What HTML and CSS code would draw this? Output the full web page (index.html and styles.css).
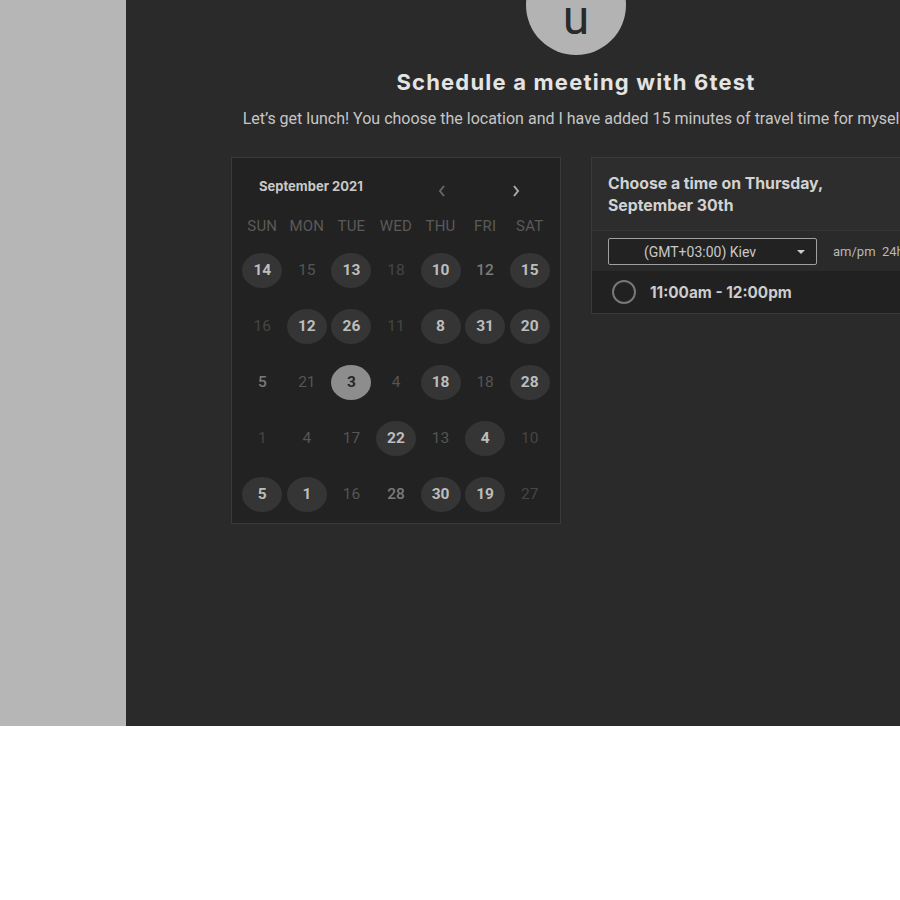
FILE: index.html
```html
<!DOCTYPE html>
<html>
<head>
<meta charset="utf-8">
<link rel="stylesheet" href="styles.css">
</head>
<body>
<div class="page">
  <div class="side"></div>
  <div class="main">
    <div class="avatar"><span>u</span></div>
    <h1 class="title">Schedule a meeting with 6test</h1>
    <p class="subtitle">Let’s get lunch! You choose the location and I have added 15 minutes of travel time for myself.</p>
    <div class="panels">
      <div class="calendar">
        <div class="cal-head">
          <span class="month">September 2021</span>
          <span class="arrow prev">
            <svg width="10" height="14" viewBox="0 0 10 14"><path d="M7 2 L3 7 L7 12" fill="none" stroke="#666" stroke-width="2"/></svg>
          </span>
          <span class="arrow next">
            <svg width="10" height="14" viewBox="0 0 10 14"><path d="M3 2 L7 7 L3 12" fill="none" stroke="#aaa" stroke-width="2"/></svg>
          </span>
        </div>
        <div class="grid">
          <div class="wd">SUN</div><div class="wd">MON</div><div class="wd">TUE</div><div class="wd">WED</div><div class="wd">THU</div><div class="wd">FRI</div><div class="wd">SAT</div>

          <div class="day"><span class="on">14</span></div>
          <div class="day"><span class="off">15</span></div>
          <div class="day"><span class="on">13</span></div>
          <div class="day"><span class="off dim">18</span></div>
          <div class="day"><span class="on">10</span></div>
          <div class="day"><span class="off mid">12</span></div>
          <div class="day"><span class="on">15</span></div>

          <div class="day"><span class="off dim">16</span></div>
          <div class="day"><span class="on">12</span></div>
          <div class="day"><span class="on">26</span></div>
          <div class="day"><span class="off dim">11</span></div>
          <div class="day"><span class="on">8</span></div>
          <div class="day"><span class="on">31</span></div>
          <div class="day"><span class="on">20</span></div>

          <div class="day"><span class="off mid">5</span></div>
          <div class="day"><span class="off">21</span></div>
          <div class="day"><span class="sel">3</span></div>
          <div class="day"><span class="off">4</span></div>
          <div class="day"><span class="on">18</span></div>
          <div class="day"><span class="off">18</span></div>
          <div class="day"><span class="on">28</span></div>

          <div class="day"><span class="off dim">1</span></div>
          <div class="day"><span class="off">4</span></div>
          <div class="day"><span class="off">17</span></div>
          <div class="day"><span class="on">22</span></div>
          <div class="day"><span class="off">13</span></div>
          <div class="day"><span class="on">4</span></div>
          <div class="day"><span class="off dim">10</span></div>

          <div class="day"><span class="on">5</span></div>
          <div class="day"><span class="on">1</span></div>
          <div class="day"><span class="off">16</span></div>
          <div class="day"><span class="off mid">28</span></div>
          <div class="day"><span class="on">30</span></div>
          <div class="day"><span class="on">19</span></div>
          <div class="day"><span class="off dim">27</span></div>
        </div>
      </div>
      <div class="times">
        <div class="times-head">Choose a time on Thursday,<br>September 30th</div>
        <div class="tz-row">
          <div class="select">
            <span>(GMT+03:00) Kiev</span>
            <svg class="caret" width="8" height="4" viewBox="0 0 8 4"><path d="M0 0 L8 0 L4 4 Z" fill="#ccc"/></svg>
          </div>
          <span class="fmt">am/pm&nbsp;&nbsp;24h</span>
        </div>
        <div class="slot">
          <span class="radio"></span>
          <span class="slot-text">11:00am - 12:00pm</span>
        </div>
      </div>
    </div>
  </div>
</div>
</body>
</html>
```
FILE: styles.css
```css
html, body {
  margin: 0;
  padding: 0;
  overflow: hidden;
  background: #ffffff;
  font-family: Roboto, "Liberation Sans", sans-serif;
}
.page {
  display: flex;
  height: 726px;
  width: 1026px;
}
.side {
  width: 126px;
  flex: none;
  background: #b6b6b6;
}
.main {
  width: 900px;
  flex: none;
  background: #2a2a2a;
  display: flex;
  flex-direction: column;
  align-items: center;
  overflow: hidden;
}
.avatar {
  width: 100px;
  height: 100px;
  border-radius: 50%;
  background: #b3b3b3;
  margin-top: -45px;
  flex: none;
  display: flex;
  justify-content: center;
  align-items: center;
}
.avatar span {
  font-family: Roboto, sans-serif;
  font-size: 48px;
  line-height: 48px;
  color: #2a2a2a;
  margin-top: 26px;
}
.title {
  margin: 13px 0 0;
  font-family: Inter, "Liberation Sans", sans-serif;
  font-weight: 700;
  font-size: 22px;
  line-height: 28px;
  color: #e4e4e4;
  letter-spacing: 1.2px;
}
.subtitle {
  margin: 13px 0 0;
  font-size: 16px;
  line-height: 20px;
  color: #c6c6c6;
  white-space: nowrap;
}
.panels {
  display: flex;
  gap: 30px;
  margin-top: 28px;
  margin-left: 2px;
  align-items: flex-start;
}
.calendar {
  width: 328px;
  border: 1px solid #3a3a3a;
  background: #222222;
  padding-bottom: 1px;
}
.cal-head {
  height: 52px;
  display: flex;
  align-items: center;
  position: relative;
}
.month {
  margin-left: 27px;
  font-family: Inter, "Liberation Sans", sans-serif;
  font-size: 13px;
  font-weight: 700;
  color: #c8c8c8;
  margin-top: 4px;
}
.arrow {
  position: absolute;
  top: 26px;
  display: flex;
}
.prev { left: 205px; }
.next { left: 279px; }
.grid {
  display: grid;
  grid-template-columns: repeat(7, 1fr);
  grid-auto-rows: 56px;
  grid-template-rows: 32px;
  padding: 0 8px;
}
.wd {
  display: flex;
  align-items: center;
  justify-content: center;
  font-size: 15px;
  color: #5a5a5a;
  letter-spacing: 0.2px;
}
.day {
  display: flex;
  align-items: center;
  justify-content: center;
}
.day span {
  width: 40px;
  height: 35px;
  border-radius: 50%;
  display: flex;
  align-items: center;
  justify-content: center;
  font-size: 15.5px;
}
.on {
  background: #353535;
  color: #bdbdbd;
  font-weight: 700;
}
.sel {
  background: #8d8d8d;
  color: #262626;
  font-weight: 700;
}
.off {
  color: #555555;
}
.off.dim { color: #464646; }
.off.mid { color: #7a7a7a; font-weight: 500; }
.times {
  width: 330px;
  border: 1px solid #3a3a3a;
  background: #2d2d2d;
}
.times-head {
  padding: 15px 16px 13px;
  font-family: Inter, "Liberation Sans", sans-serif;
  font-size: 15.8px;
  line-height: 22px;
  font-weight: 700;
  color: #d2d2d2;
  border-bottom: 1px solid #353535;
}
.tz-row {
  display: flex;
  align-items: center;
  padding: 7px 16px 6px;
  background: #2a2a2a;
}
.select {
  width: 207px;
  height: 25px;
  border: 1px solid #a0a0a0;
  border-radius: 2px;
  background: #222222;
  display: flex;
  align-items: center;
  justify-content: center;
  position: relative;
  font-size: 14px;
  color: #c8c8c8;
}
.select span { margin-left: -25px; }
.caret {
  position: absolute;
  right: 11px;
  top: 11px;
}
.fmt {
  margin-left: 16px;
  font-size: 13px;
  color: #b8b8b8;
  white-space: nowrap;
}
.slot {
  display: flex;
  align-items: center;
  height: 42px;
  background: #212121;
  padding-left: 20px;
}
.radio {
  width: 20px;
  height: 20px;
  border: 2px solid #777;
  border-radius: 50%;
}
.slot-text {
  margin-left: 14px;
  font-family: Inter, "Liberation Sans", sans-serif;
  font-size: 15.3px;
  font-weight: 700;
  color: #cdcdcd;
}
```
